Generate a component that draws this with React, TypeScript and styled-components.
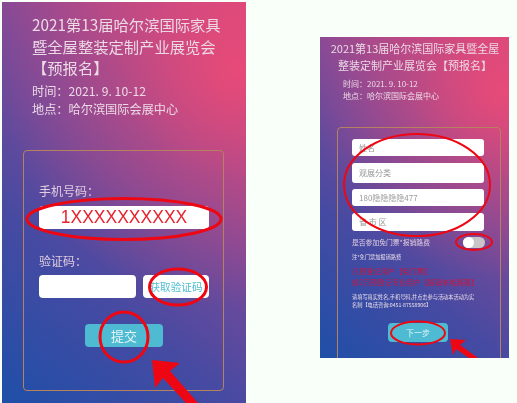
import React from 'react';
import styled, { createGlobalStyle } from 'styled-components';

const GlobalStyle = createGlobalStyle`
  html, body {
    margin: 0;
    padding: 0;
    background: #f9fff9;
    font-family: "Noto Sans CJK SC", "Liberation Sans", sans-serif;
  }
`;

const Page = styled.div`
  position: relative;
  width: 517px;
  height: 403px;
  overflow: hidden;
  display: flex;
  align-items: flex-start;
  gap: 74px;
  padding: 2px 0 0 2px;
  box-sizing: border-box;
`;

const Phone = styled.section<{ $small?: boolean }>`
  flex: none;
  box-sizing: border-box;
  overflow: hidden;
  color: #ecd9e6;
  width: ${({ $small }) => ($small ? '189px' : '244px')};
  height: ${({ $small }) => ($small ? '321px' : '401px')};
  margin-top: ${({ $small }) => ($small ? '35px' : '0')};
  padding: ${({ $small }) => ($small ? '3px 8px 0 17px' : '12px 22px 0')};
  filter: blur(0.45px);
  background:
    radial-gradient(circle at 96% 17%, rgba(236, 74, 118, 0.9) 0, rgba(226, 74, 120, 0.4) 28%, rgba(190, 70, 130, 0) 58%),
    linear-gradient(40deg, #1f4fa8 0%, #474aa2 32%, #804a97 62%, #b04a8a 84%, #d04a80 100%);
`;

const Title = styled.h1<{ $small?: boolean }>`
  margin: 0;
  font-weight: 400;
  font-size: ${({ $small }) => ($small ? '11px' : '15.3px')};
  line-height: ${({ $small }) => ($small ? '17px' : '21.5px')};
  text-align: ${({ $small }) => ($small ? 'center' : 'left')};
  padding-left: ${({ $small }) => ($small ? '0' : '8px')};
  margin-left: ${({ $small }) => ($small ? '-8px' : '0')};
  white-space: nowrap;
`;

const Info = styled.p<{ $small?: boolean }>`
  margin: 0;
  font-size: ${({ $small }) => ($small ? '8px' : '12.2px')};
  line-height: ${({ $small }) => ($small ? '12px' : '18px')};
  padding-left: ${({ $small }) => ($small ? '6px' : '8px')};
  white-space: pre;

  &:first-of-type {
    margin-top: ${({ $small }) => ($small ? '4px' : '3px')};
  }
`;

const FormBox = styled.div<{ $small?: boolean }>`
  box-sizing: border-box;
  border: 1px solid #b5815f;
  border-radius: 4px;
  ${({ $small }) =>
    $small
      ? `
    width: 164px;
    height: 240px;
    margin-top: 25px;
    padding: 11px 16px 0 14px;
  `
      : `
    width: 201px;
    height: 241px;
    margin: 32px 0 0 -1px;
    padding: 31px 14px 0 15px;
  `}
`;

const FieldLabel = styled.div<{ $top?: number }>`
  margin-top: ${({ $top }) => $top ?? 0}px;
  font-size: 12px;
  line-height: 18px;
  color: #e0cde0;
`;

const PhoneInput = styled.div`
  height: 23px;
  margin-top: 6px;
  background: #fff;
  border-radius: 4px;
  color: #e8232f;
  font-family: "Liberation Sans", sans-serif;
  font-size: 17.5px;
  line-height: 23px;
  text-align: center;
`;

const CodeRow = styled.div`
  display: flex;
  gap: 7px;
  margin-top: 5px;
  height: 23px;
`;

const CodeInput = styled.div`
  width: 97px;
  background: #fff;
  border-radius: 4px;
`;

const CodeButton = styled.div`
  flex: 1;
  background: #fff;
  border-radius: 4px;
  color: #4fbdd0;
  font-size: 10.6px;
  line-height: 23px;
  text-align: center;
  white-space: nowrap;
`;

const SubmitButton = styled.div<{ $small?: boolean }>`
  background: #4ebbd2;
  border-radius: 4px;
  color: #e6f5f8;
  text-align: center;
  ${({ $small }) =>
    $small
      ? `
    width: 60px;
    height: 19px;
    margin: 14px auto 0;
    font-size: 8px;
    line-height: 19px;
  `
      : `
    width: 78px;
    height: 23px;
    margin: 26px auto 0;
    font-size: 13px;
    line-height: 23px;
  `}
`;

const TextInput = styled.div<{ $height: number }>`
  height: ${({ $height }) => $height}px;
  line-height: ${({ $height }) => $height}px;
  margin-bottom: 6.5px;
  padding-left: 7px;
  background: #fff;
  border-radius: 3px;
  color: #999;
  font-size: 8px;
`;

const ToggleRow = styled.div`
  display: flex;
  align-items: center;
  justify-content: space-between;
  height: 12px;
  margin-top: -1px;
  font-size: 6.8px;
  color: #e0cde0;
  white-space: nowrap;
`;

const Toggle = styled.span`
  display: block;
  width: 22px;
  height: 11px;
  margin-right: -1px;
  border-radius: 6px;
  background: #c9c4c8;
  position: relative;

  &::before {
    content: '';
    position: absolute;
    left: 0;
    top: 0;
    width: 11px;
    height: 11px;
    border-radius: 50%;
    background: #fff;
  }
`;

const Note = styled.div<{ $top: number }>`
  margin-top: ${({ $top }) => $top}px;
  font-size: 5.2px;
  line-height: 8px;
  color: #ecdfe9;
  white-space: nowrap;
`;

const Warning = styled.div<{ $top?: number }>`
  margin-top: ${({ $top }) => $top ?? 0}px;
  font-size: 7.2px;
  line-height: 10.5px;
  color: #c8173f;
  white-space: nowrap;
`;

const Annotations = styled.svg`
  position: absolute;
  left: 0;
  top: 0;
  width: 517px;
  height: 403px;
  pointer-events: none;
`;

const Marks = styled.g<{ $weight: number }>`
  fill: none;
  stroke: #ee0712;
  stroke-width: ${({ $weight }) => $weight}px;
`;

export default function App() {
  return (
    <>
      <GlobalStyle />
      <Page>
        <Phone>
          <Title>
            2021第13届哈尔滨国际家具
            <br />
            暨全屋整装定制产业展览会
            <br />
            【预报名】
          </Title>
          <Info>时间：2021. 9. 10-12</Info>
          <Info>地点：哈尔滨国际会展中心</Info>
          <FormBox>
            <FieldLabel>手机号码：</FieldLabel>
            <PhoneInput>1XXXXXXXXXX</PhoneInput>
            <FieldLabel $top={23}>验证码：</FieldLabel>
            <CodeRow>
              <CodeInput />
              <CodeButton>获取验证码</CodeButton>
            </CodeRow>
            <SubmitButton>提交</SubmitButton>
          </FormBox>
        </Phone>

        <Phone $small>
          <Title $small>
            2021第13届哈尔滨国际家具暨全屋
            <br />
            整装定制产业展览会【预报名】
          </Title>
          <Info $small>时间：2021. 9. 10-12</Info>
          <Info $small>地点：哈尔滨国际会展中心</Info>
          <FormBox $small>
            <TextInput $height={17}>姓名</TextInput>
            <TextInput $height={20}>观展分类</TextInput>
            <TextInput $height={17}>180隐隐隐隐477</TextInput>
            <TextInput $height={18}>省 市 区</TextInput>
            <ToggleRow>
              是否参加免门票*报销路费
              <Toggle />
            </ToggleRow>
            <Note $top={5}>注*免门票加报销路费</Note>
            <Warning $top={5}>凡预登记用户【免门票】</Warning>
            <Warning>前2万预登记专业用户【报销来哈路费】</Warning>
            <Note $top={6}>
              请填写真实姓名,手机号码,并点击参与活动本活动为实
              <br />
              名制【电话咨询:0451-87558906】
            </Note>
            <SubmitButton $small>下一步</SubmitButton>
          </FormBox>
        </Phone>

        <Annotations viewBox="0 0 517 403">
          <Marks $weight={3}>
            <ellipse cx="124" cy="219" rx="97" ry="20.5" />
            <ellipse cx="178" cy="287" rx="28.5" ry="18" />
            <ellipse cx="124" cy="337" rx="24" ry="25" />
          </Marks>
          <Marks $weight={2}>
            <ellipse cx="417" cy="185" rx="73" ry="51" />
            <ellipse cx="474" cy="242" rx="18" ry="8" />
            <ellipse cx="418" cy="333" rx="27" ry="11.5" />
          </Marks>
          <g fill="#ee0712">
            <polygon points="152,360 180,363 170,371 198,403 186,403 163,378 155,388" />
            <polygon points="450,339 466,340 460,345 478,358 469,358 456,349 453,355" />
          </g>
        </Annotations>
      </Page>
    </>
  );
}
